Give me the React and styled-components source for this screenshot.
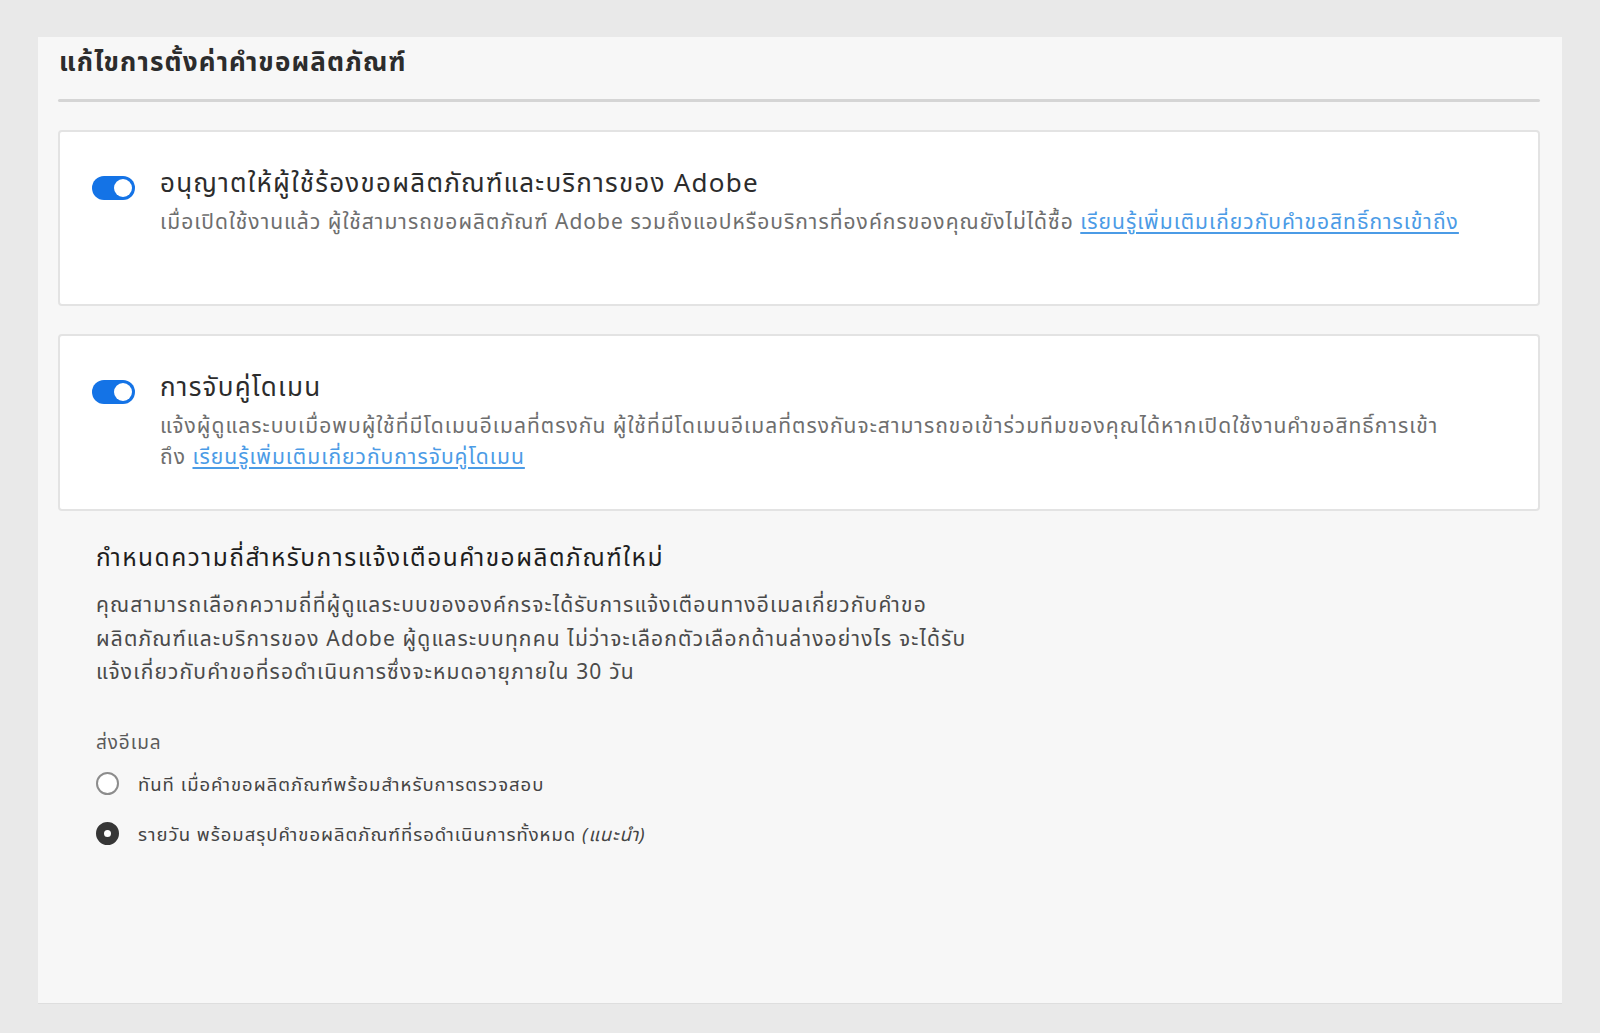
import React from 'react'
import styled, { createGlobalStyle } from 'styled-components'

const GlobalStyle = createGlobalStyle`
	html, body {
		margin: 0;
		padding: 0;
		background: #e9e9e9;
		font-family: "Noto Sans", "Noto Sans Thai", "Noto Sans Thai UI", "Open Sans", sans-serif;
	}
`

const Page = styled.div`
	width: 1600px;
	height: 1033px;
	padding: 37px 38px 30px 38px;
	box-sizing: border-box;
`

const Panel = styled.main`
	background: #f7f7f7;
	height: 966px;
	padding: 4px 22px 0 20px;
	box-sizing: border-box;
	box-shadow: 0 1px 0 #dedede;
`

const PageTitle = styled.h1`
	margin: 0;
	padding-left: 1px;
	font-size: 26px;
	font-weight: 700;
	letter-spacing: 1.15px;
	color: #2c2c2c;
	line-height: 40px;
`

const Divider = styled.hr`
	border: none;
	height: 3px;
	border-radius: 2px;
	background: #d5d5d5;
	margin: 18px 0 28px;
`

const Card = styled.section`
	background: #fff;
	border: 2px solid #e3e3e3;
	border-radius: 4px;
	padding: 32px 30px 0 32px;
	height: ${p => p.$height}px;
	box-sizing: border-box;
	display: flex;
	gap: 25px;
	margin-bottom: 28px;
`

const Toggle = styled.span`
	flex: none;
	width: 43px;
	height: 24px;
	margin-top: 12px;
	border-radius: 12px;
	background: #1473e6;
	position: relative;

	&::after {
		content: '';
		position: absolute;
		right: 3px;
		top: 3px;
		width: 18px;
		height: 18px;
		border-radius: 50%;
		background: #fff;
	}
`

const CardBody = styled.div`
	flex: 1;
`

const CardTitle = styled.h2`
	margin: 0;
	font-size: 26px;
	font-weight: 400;
	letter-spacing: 1.25px;
	color: #2c2c2c;
	line-height: 36px;
`

const CardText = styled.p`
	margin: 6px 0 0;
	max-width: ${p => p.$maxWidth || 1340}px;
	font-size: 21px;
	letter-spacing: 1.03px;
	color: #6e6e6e;
	line-height: 31px;
`

const Link = styled.a`
	color: #4b9be6;
	text-decoration: underline;
	text-underline-offset: 3px;
`

const Section = styled.div`
	padding: 0 38px;
`

const SectionTitle = styled.h3`
	margin: 0;
	font-size: 24.5px;
	font-weight: 400;
	letter-spacing: 1.5px;
	color: #1e1e1e;
	line-height: 36px;
`

const SectionText = styled.p`
	margin: 13px 0 0;
	max-width: 880px;
	font-size: 21px;
	letter-spacing: 1.17px;
	line-height: 33.5px;
	color: #4a4a4a;
`

const FieldLabel = styled.div`
	margin-top: 38px;
	font-size: 19px;
	letter-spacing: 0.9px;
	color: #5a5a5a;
	line-height: 30px;
`

const RadioRow = styled.label`
	display: flex;
	align-items: center;
	gap: 19px;
	margin-top: ${p => p.$first ? 13 : 22}px;
	font-size: 18.5px;
	letter-spacing: 1px;
	color: #444;
	line-height: 28px;
`

const Radio = styled.span`
	flex: none;
	width: 23px;
	height: 23px;
	border-radius: 50%;
	box-sizing: border-box;
	border: ${p => p.$checked ? '8px solid #363636' : '2.5px solid #8c8c8c'};
	background: #fff;
`

export default function App() {
	return (
		<Page>
			<GlobalStyle />
			<Panel>
				<PageTitle>แก้ไขการตั้งค่าคำขอผลิตภัณฑ์</PageTitle>
				<Divider />
				<Card $height={176}>
					<Toggle />
					<CardBody>
						<CardTitle>อนุญาตให้ผู้ใช้ร้องขอผลิตภัณฑ์และบริการของ Adobe</CardTitle>
						<CardText>
							เมื่อเปิดใช้งานแล้ว ผู้ใช้สามารถขอผลิตภัณฑ์ Adobe รวมถึงแอปหรือบริการที่องค์กรของคุณยังไม่ได้ซื้อ{' '}
							<Link href="#">เรียนรู้เพิ่มเติมเกี่ยวกับคำขอสิทธิ์การเข้าถึง</Link>
						</CardText>
					</CardBody>
				</Card>
				<Card $height={177}>
					<Toggle />
					<CardBody>
						<CardTitle>การจับคู่โดเมน</CardTitle>
						<CardText $maxWidth={1285}>
							แจ้งผู้ดูแลระบบเมื่อพบผู้ใช้ที่มีโดเมนอีเมลที่ตรงกัน ผู้ใช้ที่มีโดเมนอีเมลที่ตรงกันจะสามารถขอเข้าร่วมทีมของคุณได้หากเปิดใช้งานคำขอสิทธิ์การเข้า<wbr />ถึง{' '}
							<Link href="#">เรียนรู้เพิ่มเติมเกี่ยวกับการจับคู่โดเมน</Link>
						</CardText>
					</CardBody>
				</Card>
				<Section>
					<SectionTitle>กำหนดความถี่สำหรับการแจ้งเตือนคำขอผลิตภัณฑ์ใหม่</SectionTitle>
					<SectionText>
						คุณสามารถเลือกความถี่ที่ผู้ดูแลระบบขององค์กรจะได้รับการแจ้งเตือนทางอีเมลเกี่ยวกับคำขอผลิตภัณฑ์และบริการของ Adobe ผู้ดูแลระบบทุกคน ไม่ว่าจะเลือกตัวเลือกด้านล่างอย่างไร จะได้รับแจ้งเกี่ยวกับคำขอที่รอดำเนินการซึ่งจะหมดอายุภายใน 30 วัน
					</SectionText>
					<FieldLabel>ส่งอีเมล</FieldLabel>
					<RadioRow $first>
						<Radio />
						ทันที เมื่อคำขอผลิตภัณฑ์พร้อมสำหรับการตรวจสอบ
					</RadioRow>
					<RadioRow>
						<Radio $checked />
						<span>รายวัน พร้อมสรุปคำขอผลิตภัณฑ์ที่รอดำเนินการทั้งหมด <i>(แนะนำ)</i></span>
					</RadioRow>
				</Section>
			</Panel>
		</Page>
	)
}
